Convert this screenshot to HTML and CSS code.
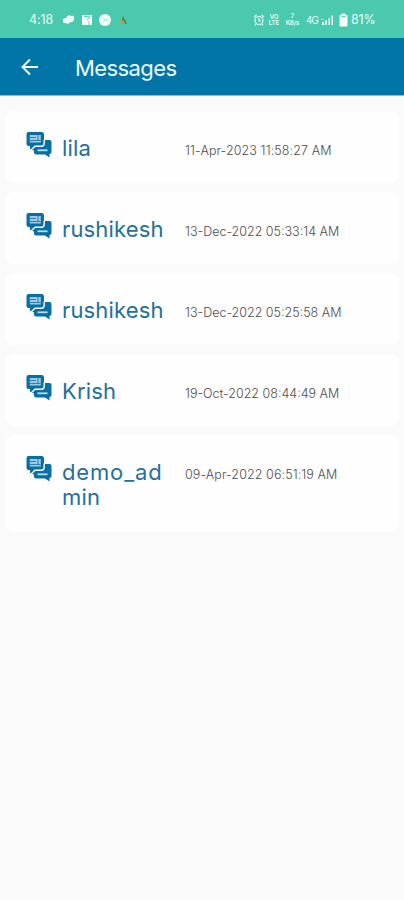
FILE: index.html
```
<!DOCTYPE html>
<html lang="en">
<head>
<meta charset="utf-8">
<title>Messages</title>
<link rel="stylesheet" href="styles.css">
</head>
<body>
<svg class="defs" width="0" height="0" aria-hidden="true">
  <symbol id="chat" viewBox="0 0 26 27">
    <path fill="#086fa4" d="M2.500 0H16Q18 0 18 2.500V8H23.500Q25.500 8 25.500 10V20Q25.500 22 23.500 22V25.500L19 22.500H10Q8 22.500 8 20.500V18.500L4 17V14H2.500Q.5 14 .5 12V2Q.5 0 2.500 0Z"/>
    <path fill="none" stroke="#fff" stroke-width="1.4" d="M5 18L9 14.300H16Q18.200 14 18.200 11V7.500"/>
    <path fill="#9dcae0" d="M3.800 3H14.800V10.500H3.800Z"/>
    <path fill="none" stroke="#397fac" stroke-width="1" d="M4 8.500H14.500M12 3V8M4 5.500H10"/>
    <path fill="none" stroke="#b9dded" stroke-width="1.800" d="M11.500 18.300H21.500"/>
  </symbol>
</svg>
<header class="status">
  <span class="clock">4:18</span>
  <svg class="notices" width="70" height="16" viewBox="0 0 70 16" fill="#f2fffb">
    <path d="M1 9Q0 6 4 6Q6 2 9 4Q13 3 12 7Q12 10 9 10Q6 13 4 11Q1 12 1 9Z"/>
    <path d="M5 9L9 6M7 10L11 7" fill="none" stroke="#a9e5d8" stroke-width=".6"/>
    <path d="M20 3H30V13H20Z"/>
    <path d="M22 4.500H28M25 8L29 5M27 13V9" fill="none" stroke="#6fd2bd" stroke-width="1"/>
    <circle cx="43" cy="8" r="6"/>
    <path d="M40 6L43 8L46 5M41 11L43 8L47 9" fill="none" stroke="#a6e3d7" stroke-width=".8"/>
    <path d="M61 4L57 12H60L63 8Z" fill="#c99d4a"/>
    <path d="M61 4L65 12H62L60 7Z" fill="#239b58"/>
    <path d="M59 9H62L63 12H58Z" fill="#df8b4d"/>
  </svg>
  <div class="system">
    <svg width="12" height="14" viewBox="0 0 12 14" fill="none" stroke="#e5fff8" stroke-width="1.2">
      <circle cx="6" cy="7.5" r="4"/><path d="M6 5V8H8M1 4L3.5 2M11 4L8.500 2M3 11L2 12.500M9 11L10 12.500"/>
    </svg>
    <span class="volte"><b>VO</b><b>LTE</b></span>
    <span class="rate"><b>7</b><b>KB/s</b></span>
    <span class="network">4G</span>
    <svg class="signal" width="13" height="14" viewBox="0 0 13 14" fill="#e5fff8">
      <path d="M1 9H3V12H1ZM4 7.500H6V12H4ZM7.500 5H9V12H7.500ZM10.500 2.500H12V12H10.500Z"/><path d="M0 6H3V7H0Z"/>
    </svg>
    <svg class="battery" width="9" height="14" viewBox="0 0 9 14">
      <path fill="#f7fffd" d="M2.500 .5H6.500V2H8Q8.500 2 8.500 3V12.500Q8.500 13.500 7.500 13.500H1.500Q.5 13.500 .5 12.500V3Q.5 2 1.500 2H2.500Z"/><path fill="#62cfb7" d="M2.500 3H6.500V4.200H2.500Z"/>
    </svg>
    <span class="percent">81%</span>
  </div>
</header>
<nav class="appbar">
  <svg width="18" height="18" viewBox="0 0 18 18" fill="none" stroke="#eefaff" stroke-width="2"><path d="M17 9H2M9 1.500L1.500 9L9 16.500"/></svg>
  <h1>Messages</h1>
</nav>
<main class="list">
  <article class="card"><svg class="chat"><use href="#chat"/></svg><h2>lila</h2><time>11-Apr-2023 11:58:27 AM</time></article>
  <article class="card"><svg class="chat"><use href="#chat"/></svg><h2>rushikesh</h2><time class="tight">13-Dec-2022 05:33:14 AM</time></article>
  <article class="card"><svg class="chat"><use href="#chat"/></svg><h2>rushikesh</h2><time class="tight">13-Dec-2022 05:25:58 AM</time></article>
  <article class="card"><svg class="chat"><use href="#chat"/></svg><h2>Krish</h2><time class="tight">19-Oct-2022 08:44:49 AM</time></article>
  <article class="card"><svg class="chat"><use href="#chat"/></svg><h2><span class="wide">demo_ad</span><br>min</h2><time>09-Apr-2022 06:51:19 AM</time></article>
</main>
</body>
</html>
```
FILE: styles.css
```
* { box-sizing: border-box; }
body { margin: 0; min-height: 900px; background: #fafafa; font-family: Inter, Roboto, sans-serif; }
.defs { display: block; height: 0; }
.status { display: flex; align-items: center; height: 38px; padding: 1px 28px 0 29px; background: #4bc9ae; color: #e5fff8; }
.clock { width: 33px; font-size: 12.5px; letter-spacing: -.1px; }
.system { display: flex; align-items: center; margin-left: auto; }
.volte, .rate { display: flex; flex-direction: column; align-items: center; font-size: 6px; line-height: 6px; }
.volte b, .rate b { font-weight: 600; }
.volte { margin-left: 3px; width: 12px; }
.rate { margin-left: 4px; width: 17px; gap: 1px; }
.network { margin-left: 5px; width: 13px; font-size: 10px; letter-spacing: -.9px; }
.signal { margin-left: 2px; }
.battery { margin-left: 5px; }
.percent { margin-left: 3px; width: 25px; font-size: 12.5px; letter-spacing: -.2px; white-space: nowrap; }
.appbar { display: flex; align-items: center; height: 58px; padding: 0 21px; background: #0275a8; border-bottom: 1px solid #7cc5df; color: #eefaff; }
.appbar h1 { margin: 2px 0 0 36px; font-size: 22px; line-height: 28px; font-weight: 400; letter-spacing: -.6px; }
.list { display: flex; flex-direction: column; gap: 9px; padding: 15px 5px; }
.card { display: grid; grid-template-columns: 36px 123px 1fr; align-items: start; min-height: 72px; padding: 21px 21px 0; border-radius: 9px; background: #fefefe; box-shadow: 0 0 3px #fdfdfd; }
.card:last-child { min-height: 97px; }
.chat { width: 26px; height: 27px; }
.card h2 { margin: 4px 0 0; color: #22709c; font-size: 22px; line-height: 25px; font-weight: 400; letter-spacing: .15px; }
.wide { letter-spacing: .85px; }
.card time { margin-top: 11px; color: #4d4d4d; font-size: 12.5px; line-height: 16px; font-weight: 300; letter-spacing: .1px; white-space: nowrap; }
.card .tight { letter-spacing: 0; }
```
